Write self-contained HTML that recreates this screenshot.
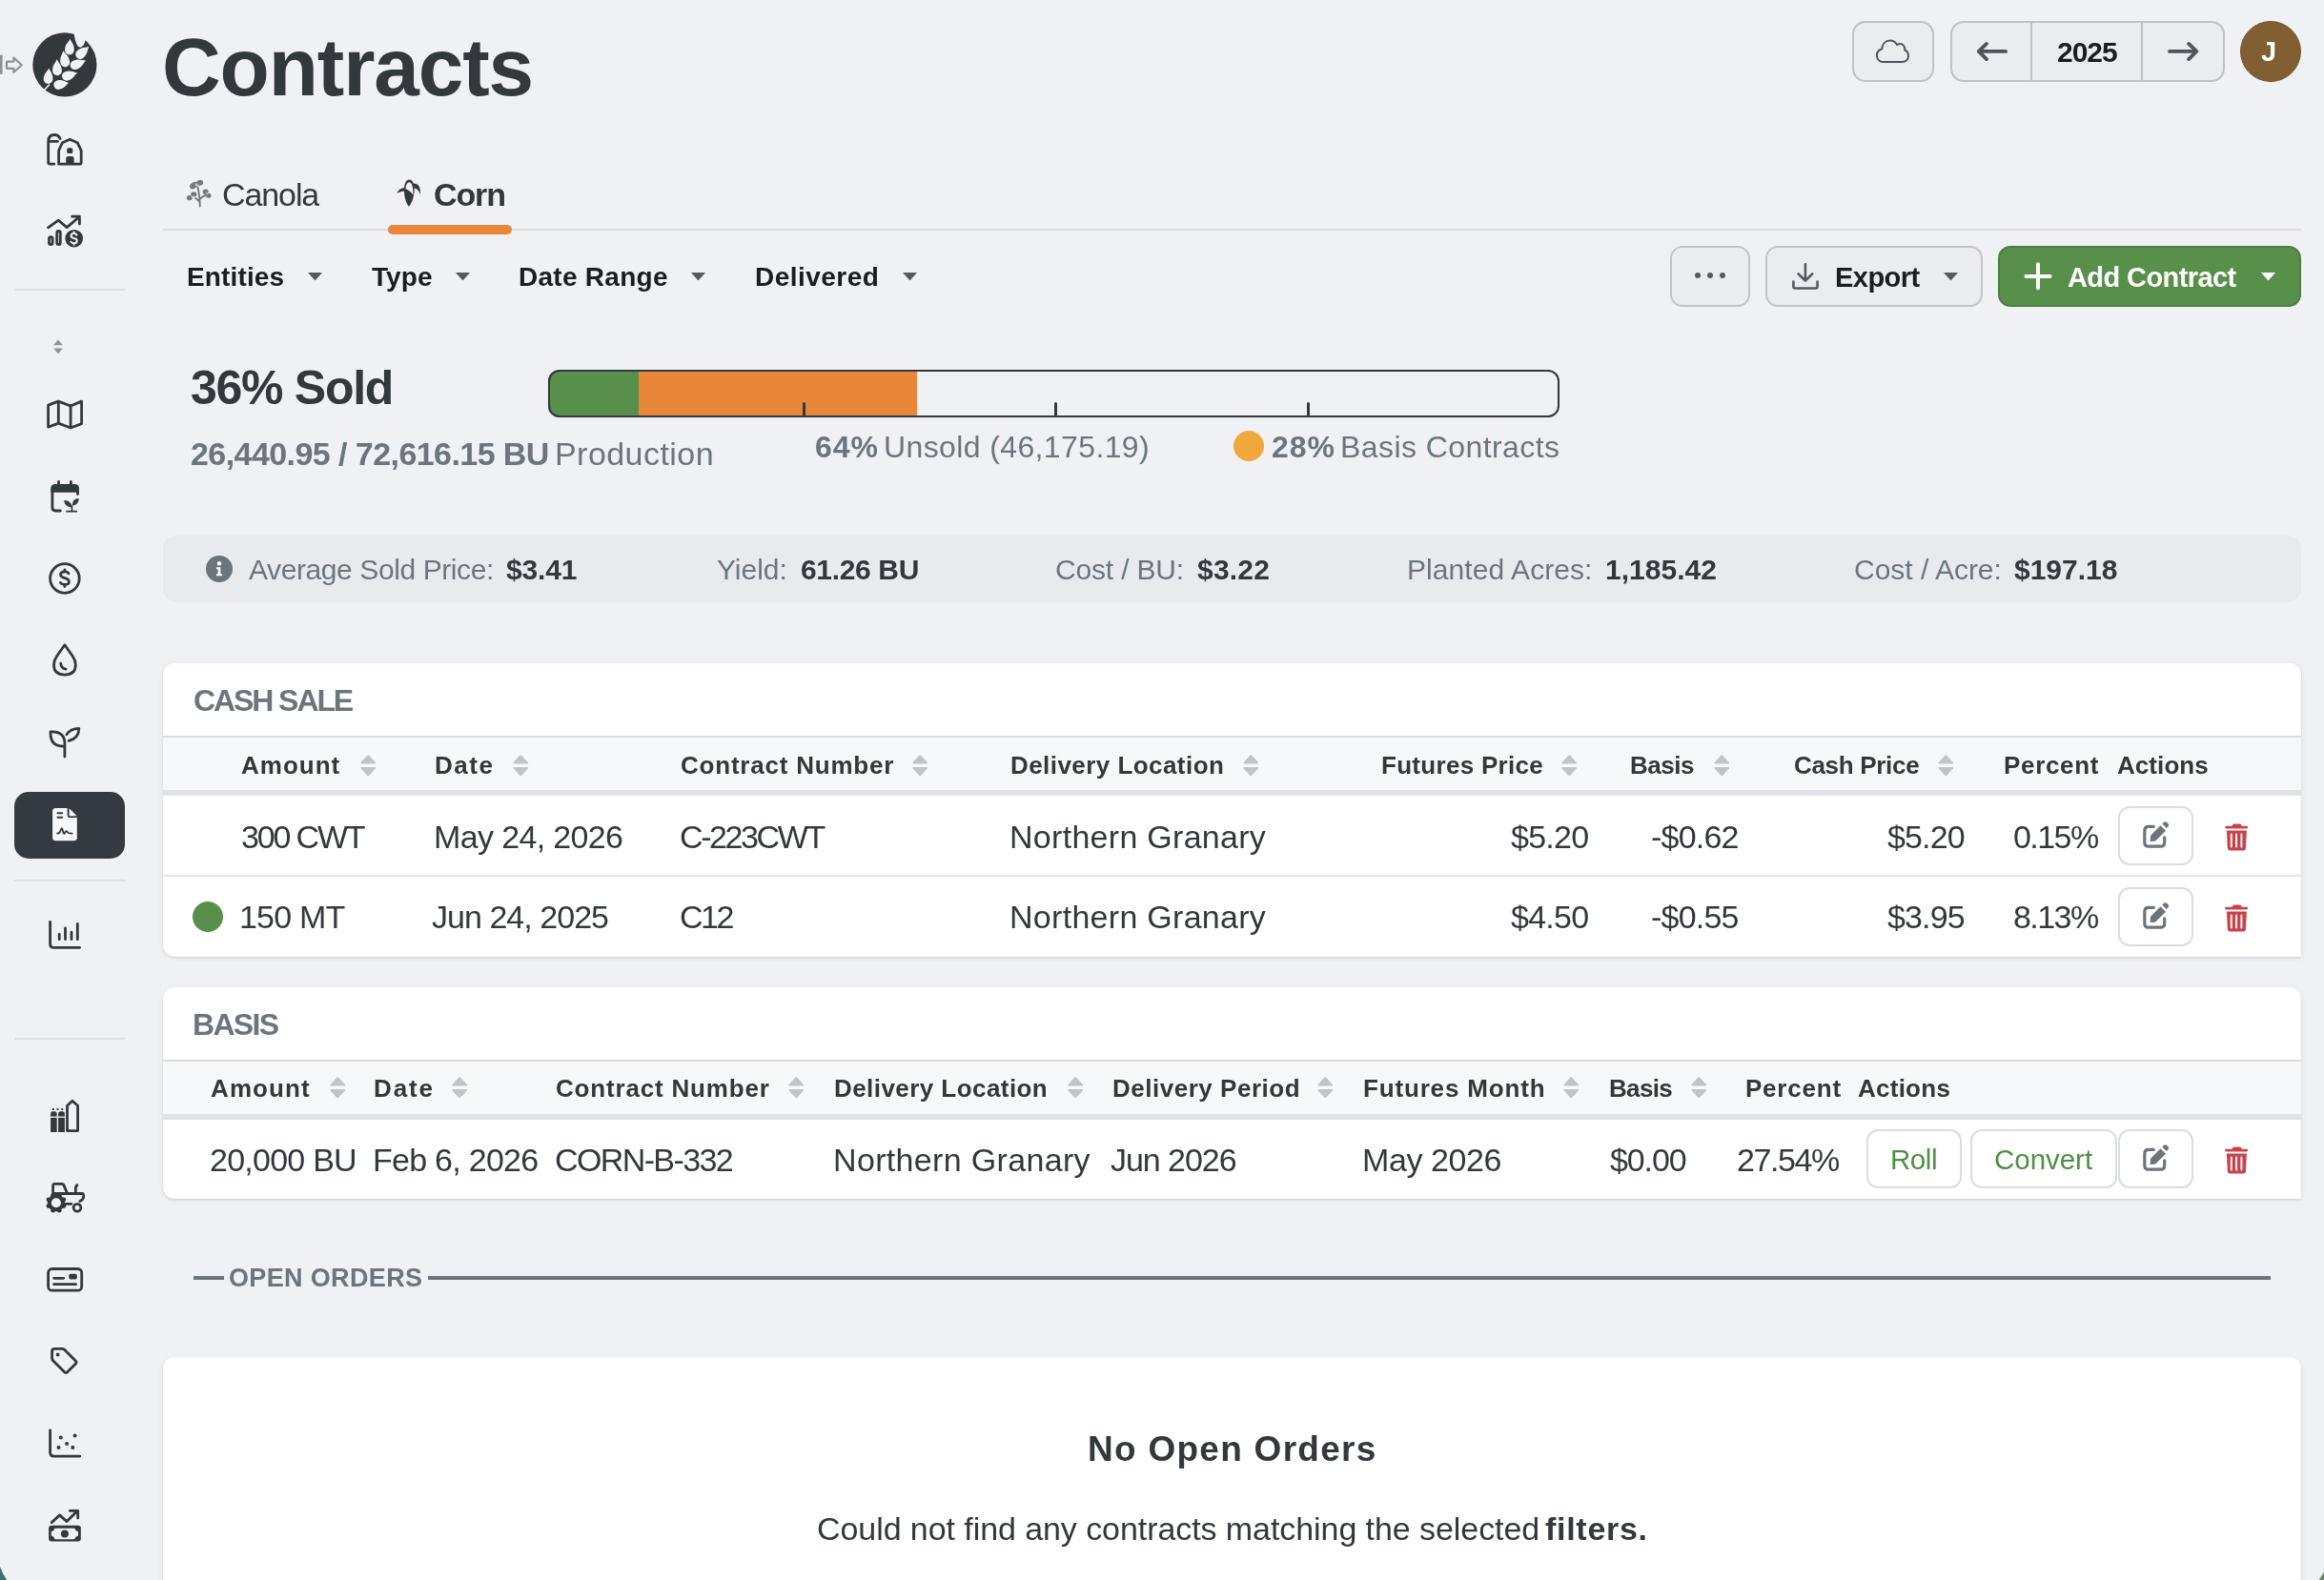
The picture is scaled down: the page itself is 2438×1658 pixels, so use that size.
<!DOCTYPE html>
<html><head><meta charset="utf-8"><title>Contracts</title><style>html,body{margin:0;padding:0;width:2438px;height:1658px;overflow:hidden;background:#f0f1f4;font-family:"Liberation Sans",sans-serif;}
.a{position:absolute;}
.tx{position:absolute;white-space:nowrap;line-height:1;will-change:transform;}
.tx b{font-weight:700}
</style></head><body>
<div class="a nt" style="left:171px;top:562px;width:2243px;height:70px;background:#e9eaee;border-radius:14px;"></div>
<div class="a nt" style="left:171px;top:696px;width:2243px;height:308px;background:#fff;border-radius:12px 12px 0 12px;box-shadow:0 1px 2px rgba(0,0,0,0.12),0 2px 6px rgba(0,0,0,0.04),0 0 8px rgba(0,0,0,0.025);"></div>
<div class="a nt" style="left:171px;top:1036px;width:2243px;height:222px;background:#fff;border-radius:12px 12px 0 12px;box-shadow:0 1px 2px rgba(0,0,0,0.12),0 2px 6px rgba(0,0,0,0.04),0 0 8px rgba(0,0,0,0.025);"></div>
<div class="a nt" style="left:171px;top:1424px;width:2243px;height:276px;background:#fff;border-radius:12px;box-shadow:0 1px 2px rgba(0,0,0,0.12),0 2px 6px rgba(0,0,0,0.04),0 0 8px rgba(0,0,0,0.025);"></div>
<div class="a nt" style="left:171px;top:772px;width:2243px;height:2px;background:#dcdcdd;"></div>
<div class="a nt" style="left:171px;top:774px;width:2243px;height:55px;background:#f7f8fa;"></div>
<div class="a nt" style="left:171px;top:829px;width:2243px;height:6px;background:#dfe2e6;"></div>
<div class="a nt" style="left:171px;top:1112px;width:2243px;height:2px;background:#dcdcdd;"></div>
<div class="a nt" style="left:171px;top:1114px;width:2243px;height:55px;background:#f7f8fa;"></div>
<div class="a nt" style="left:171px;top:1169px;width:2243px;height:6px;background:#dfe2e6;"></div>
<div class="a nt" style="left:171px;top:918px;width:2243px;height:2px;background:#e3e5e8;"></div>
<div class="a nt" style="left:171px;top:240px;width:2243px;height:2px;background:#dcdee3;"></div>
<div class="a nt" style="left:407px;top:236px;width:130px;height:10px;background:#e8873a;border-radius:5px;"></div>
<div class="a nt" style="left:15px;top:303px;width:116px;height:2px;background:#dfe1e5;"></div>
<div class="a nt" style="left:15px;top:923px;width:116px;height:2px;background:#dfe1e5;"></div>
<div class="a nt" style="left:15px;top:1089px;width:116px;height:2px;background:#dfe1e5;"></div>
<div class="a nt" style="left:15px;top:831px;width:116px;height:70px;background:#343a3f;border-radius:15px;"></div>
<div class="a nt" style="left:1943px;top:22px;width:86px;height:64px;background:#ebecf0;border:2px solid #bfc1c4;border-radius:14px;box-sizing:border-box;"></div>
<div class="a nt" style="left:2046px;top:22px;width:288px;height:64px;background:#ebecf0;border:2px solid #bfc1c4;border-radius:14px;box-sizing:border-box;"></div>
<div class="a nt" style="left:2130px;top:24px;width:2px;height:60px;background:#bfc1c4;"></div>
<div class="a nt" style="left:2246px;top:24px;width:2px;height:60px;background:#bfc1c4;"></div>
<div class="a nt" style="left:2350px;top:22px;width:64px;height:64px;background:#825f32;border:1px solid #76562d;box-sizing:border-box;border-radius:50%;"></div>
<svg class="a nt" style="left:322.6px;top:285.7px;" width="15" height="8.5" viewBox="0 0 15 8.5"><path d="M0 0H15L7.5 8.5Z" fill="#555a61"/></svg>
<svg class="a nt" style="left:478px;top:285.7px;" width="15" height="8.5" viewBox="0 0 15 8.5"><path d="M0 0H15L7.5 8.5Z" fill="#555a61"/></svg>
<svg class="a nt" style="left:724.6px;top:285.7px;" width="15" height="8.5" viewBox="0 0 15 8.5"><path d="M0 0H15L7.5 8.5Z" fill="#555a61"/></svg>
<svg class="a nt" style="left:946.7px;top:285.7px;" width="15" height="8.5" viewBox="0 0 15 8.5"><path d="M0 0H15L7.5 8.5Z" fill="#555a61"/></svg>
<div class="a nt" style="left:1752px;top:258px;width:84px;height:64px;background:#ebecf0;border:2px solid #c2c4c8;border-radius:13px;box-sizing:border-box;"></div>
<div class="a nt" style="left:1778px;top:286px;width:6px;height:6px;background:#555a61;border-radius:50%;"></div>
<div class="a nt" style="left:1791px;top:286px;width:6px;height:6px;background:#555a61;border-radius:50%;"></div>
<div class="a nt" style="left:1804px;top:286px;width:6px;height:6px;background:#555a61;border-radius:50%;"></div>
<div class="a nt" style="left:1852px;top:258px;width:228px;height:64px;background:#ebecf0;border:2px solid #c2c4c8;border-radius:13px;box-sizing:border-box;"></div>
<svg class="a nt" style="left:2038.7px;top:286px;" width="15" height="8.5" viewBox="0 0 15 8.5"><path d="M0 0H15L7.5 8.5Z" fill="#555a61"/></svg>
<div class="a nt" style="left:2096px;top:258px;width:318px;height:64px;background:#588f4b;border:2px solid #4b7f3f;border-radius:13px;box-sizing:border-box;"></div>
<svg class="a nt" style="left:2372px;top:286px;" width="15" height="8.5" viewBox="0 0 15 8.5"><path d="M0 0H15L7.5 8.5Z" fill="#ffffff"/></svg>
<div class="a nt" style="left:575px;top:388px;width:1061px;height:50px;border-radius:12px;overflow:hidden;background:#f0f1f4;"><div class="a" style="left:0;top:0;width:95px;height:50px;background:#588f4b;"></div><div class="a" style="left:95px;top:0;width:292px;height:50px;background:#e8873a;"></div></div>
<div class="a nt" style="left:575px;top:388px;width:1061px;height:50px;border:2.5px solid #33383d;border-radius:12px;box-sizing:border-box;"></div>
<div class="a nt" style="left:841.5px;top:422px;width:3.0px;height:15px;background:#33383d;border-radius:1.5px 1.5px 0 0;"></div>
<div class="a nt" style="left:1105.5px;top:422px;width:3.0px;height:15px;background:#33383d;border-radius:1.5px 1.5px 0 0;"></div>
<div class="a nt" style="left:1370.5px;top:422px;width:3.0px;height:15px;background:#33383d;border-radius:1.5px 1.5px 0 0;"></div>
<div class="a nt" style="left:1294px;top:452px;width:32px;height:32px;background:#f0a83c;border-radius:50%;"></div>
<svg class="a nt" style="left:216px;top:583px;" width="28" height="28" viewBox="0 0 28 28"><circle cx="14" cy="14" r="14" fill="#6c757d"/><circle cx="14" cy="8.3" r="2.2" fill="#fff"/><path d="M11 12.2H15.3V19.2H17V21.3H11V19.2H12.7V14.3H11Z" fill="#fff"/></svg>
<svg class="a nt" style="left:377.9px;top:791.6px;" width="16.5" height="22.5" viewBox="0 0 16.5 22.5"><path d="M8.25 1.2L15.2 8.6H1.3Z M8.25 21.3L15.2 13.9H1.3Z" fill="#c2c3c5" stroke="#c2c3c5" stroke-width="1.9" stroke-linejoin="round"/></svg>
<svg class="a nt" style="left:537.7px;top:791.6px;" width="16.5" height="22.5" viewBox="0 0 16.5 22.5"><path d="M8.25 1.2L15.2 8.6H1.3Z M8.25 21.3L15.2 13.9H1.3Z" fill="#c2c3c5" stroke="#c2c3c5" stroke-width="1.9" stroke-linejoin="round"/></svg>
<svg class="a nt" style="left:957px;top:791.6px;" width="16.5" height="22.5" viewBox="0 0 16.5 22.5"><path d="M8.25 1.2L15.2 8.6H1.3Z M8.25 21.3L15.2 13.9H1.3Z" fill="#c2c3c5" stroke="#c2c3c5" stroke-width="1.9" stroke-linejoin="round"/></svg>
<svg class="a nt" style="left:1303.6px;top:791.6px;" width="16.5" height="22.5" viewBox="0 0 16.5 22.5"><path d="M8.25 1.2L15.2 8.6H1.3Z M8.25 21.3L15.2 13.9H1.3Z" fill="#c2c3c5" stroke="#c2c3c5" stroke-width="1.9" stroke-linejoin="round"/></svg>
<svg class="a nt" style="left:1637.7px;top:791.6px;" width="16.5" height="22.5" viewBox="0 0 16.5 22.5"><path d="M8.25 1.2L15.2 8.6H1.3Z M8.25 21.3L15.2 13.9H1.3Z" fill="#c2c3c5" stroke="#c2c3c5" stroke-width="1.9" stroke-linejoin="round"/></svg>
<svg class="a nt" style="left:1797.8px;top:791.6px;" width="16.5" height="22.5" viewBox="0 0 16.5 22.5"><path d="M8.25 1.2L15.2 8.6H1.3Z M8.25 21.3L15.2 13.9H1.3Z" fill="#c2c3c5" stroke="#c2c3c5" stroke-width="1.9" stroke-linejoin="round"/></svg>
<svg class="a nt" style="left:2033.4px;top:791.6px;" width="16.5" height="22.5" viewBox="0 0 16.5 22.5"><path d="M8.25 1.2L15.2 8.6H1.3Z M8.25 21.3L15.2 13.9H1.3Z" fill="#c2c3c5" stroke="#c2c3c5" stroke-width="1.9" stroke-linejoin="round"/></svg>
<svg class="a nt" style="left:345.7px;top:1129.7px;" width="16.5" height="22.5" viewBox="0 0 16.5 22.5"><path d="M8.25 1.2L15.2 8.6H1.3Z M8.25 21.3L15.2 13.9H1.3Z" fill="#c2c3c5" stroke="#c2c3c5" stroke-width="1.9" stroke-linejoin="round"/></svg>
<svg class="a nt" style="left:473.7px;top:1129.7px;" width="16.5" height="22.5" viewBox="0 0 16.5 22.5"><path d="M8.25 1.2L15.2 8.6H1.3Z M8.25 21.3L15.2 13.9H1.3Z" fill="#c2c3c5" stroke="#c2c3c5" stroke-width="1.9" stroke-linejoin="round"/></svg>
<svg class="a nt" style="left:827.4px;top:1129.7px;" width="16.5" height="22.5" viewBox="0 0 16.5 22.5"><path d="M8.25 1.2L15.2 8.6H1.3Z M8.25 21.3L15.2 13.9H1.3Z" fill="#c2c3c5" stroke="#c2c3c5" stroke-width="1.9" stroke-linejoin="round"/></svg>
<svg class="a nt" style="left:1119.6px;top:1129.7px;" width="16.5" height="22.5" viewBox="0 0 16.5 22.5"><path d="M8.25 1.2L15.2 8.6H1.3Z M8.25 21.3L15.2 13.9H1.3Z" fill="#c2c3c5" stroke="#c2c3c5" stroke-width="1.9" stroke-linejoin="round"/></svg>
<svg class="a nt" style="left:1382px;top:1129.7px;" width="16.5" height="22.5" viewBox="0 0 16.5 22.5"><path d="M8.25 1.2L15.2 8.6H1.3Z M8.25 21.3L15.2 13.9H1.3Z" fill="#c2c3c5" stroke="#c2c3c5" stroke-width="1.9" stroke-linejoin="round"/></svg>
<svg class="a nt" style="left:1639.5px;top:1129.7px;" width="16.5" height="22.5" viewBox="0 0 16.5 22.5"><path d="M8.25 1.2L15.2 8.6H1.3Z M8.25 21.3L15.2 13.9H1.3Z" fill="#c2c3c5" stroke="#c2c3c5" stroke-width="1.9" stroke-linejoin="round"/></svg>
<svg class="a nt" style="left:1774px;top:1129.7px;" width="16.5" height="22.5" viewBox="0 0 16.5 22.5"><path d="M8.25 1.2L15.2 8.6H1.3Z M8.25 21.3L15.2 13.9H1.3Z" fill="#c2c3c5" stroke="#c2c3c5" stroke-width="1.9" stroke-linejoin="round"/></svg>
<div class="a nt" style="left:202px;top:946px;width:32px;height:32px;background:#588f4b;border-radius:50%;"></div>
<div class="a nt" style="left:2222px;top:846px;width:79px;height:62px;background:#fff;border:2px solid #dadde1;border-radius:12px;box-sizing:border-box;"></div>
<div class="a nt" style="left:2222px;top:931px;width:79px;height:62px;background:#fff;border:2px solid #dadde1;border-radius:12px;box-sizing:border-box;"></div>
<div class="a nt" style="left:2222px;top:1185px;width:79px;height:62px;background:#fff;border:2px solid #dadde1;border-radius:12px;box-sizing:border-box;"></div>
<div class="a nt" style="left:1958px;top:1185px;width:100px;height:62px;background:#fff;border:2px solid #dadde1;border-radius:12px;box-sizing:border-box;"></div>
<div class="a nt" style="left:2067px;top:1185px;width:154px;height:62px;background:#fff;border:2px solid #dadde1;border-radius:12px;box-sizing:border-box;"></div>
<div class="a nt" style="left:203px;top:1339px;width:32px;height:4px;background:#6c757d;"></div>
<div class="a nt" style="left:449px;top:1339px;width:1933px;height:4px;background:#6c757d;"></div>
<svg class="a nt" style="left:0;top:0" width="2438" height="1658" viewBox="0 0 2438 1658"><rect x="0" y="57.6" width="2.6" height="20.5" rx="1" fill="#8e9297"/><path d="M7 64.6H14.4V60.6L22.8 68.2L14.4 75.8V71.8H7Z" fill="none" stroke="#8e9297" stroke-width="2.2" stroke-linejoin="round"/><circle cx="67.9" cy="67.9" r="33.6" fill="#33383d"/><path d="M45.5 95.5L52 88.5" stroke="#f0f1f4" stroke-width="1.6"/><path d="M51.50 71.50C52.42 75.11 55.93 77.18 55.38 83.62A4.9 4.9 0 0 1 45.62 82.78C46.17 76.35 49.98 74.91 51.50 71.50Z" fill="#f0f1f4"/><path d="M59.80 62.00C61.08 65.67 64.79 67.46 64.90 74.22A4.9 4.9 0 0 1 55.10 74.38C54.99 67.61 58.64 65.71 59.80 62.00Z" fill="#f0f1f4"/><path d="M66.30 53.00C68.11 56.49 72.04 57.75 73.14 64.51A4.9 4.9 0 0 1 63.46 66.09C62.36 59.32 65.69 56.89 66.30 53.00Z" fill="#f0f1f4"/><path d="M73.70 40.80C74.68 44.39 78.23 46.40 77.79 52.83A4.9 4.9 0 0 1 68.01 52.17C68.45 45.73 72.24 44.23 73.70 40.80Z" fill="#f0f1f4"/><path d="M72.20 87.00C69.12 88.81 68.13 92.72 62.08 93.82A4.9 4.9 0 0 1 60.32 84.18C66.37 83.08 68.68 86.39 72.20 87.00Z" fill="#f0f1f4"/><path d="M81.20 76.20C78.15 78.45 77.55 82.49 71.28 84.47A4.9 4.9 0 0 1 68.32 75.13C74.59 73.15 77.41 76.11 81.20 76.20Z" fill="#f0f1f4"/><path d="M90.30 63.20C87.27 65.83 86.96 69.96 80.53 72.71A4.9 4.9 0 0 1 76.67 63.69C83.11 60.94 86.31 63.57 90.30 63.20Z" fill="#f0f1f4"/><path d="M93.50 48.80C91.52 52.18 92.56 56.17 87.44 60.68A4.9 4.9 0 0 1 80.96 53.32C86.07 48.81 89.90 50.34 93.50 48.80Z" fill="#f0f1f4"/><path d="M77.5 34.5C78.5 40 79.5 47.5 83.2 49.6C86.8 50 89 46 89.5 42.2L95 40L80 30Z" fill="#f0f1f4"/><path d="M77.8 35C80 36.5 83 38 86 40C88 41 89 41.5 89.5 42.2" fill="none"/><path d="M56.8 172.2H52.6Q50.7 172.2 50.7 170.3V148.5Q50.7 141.5 57 141.5Q61.5 141.5 63 145.5 M51 148.4H60.5" fill="none" stroke="#33383d" stroke-width="2.8" stroke-linecap="round" stroke-linejoin="round"/><path d="M61.6 172.2V158L65.5 149.7L73.3 146.2L81.2 149.7L85.2 158V170.5Q85.2 172.2 83.5 172.2H63.3Q61.6 172.2 61.6 170.5" fill="none" stroke="#33383d" stroke-width="2.8" stroke-linecap="round" stroke-linejoin="round"/><rect x="70.2" y="155.3" width="6.1" height="5.8" rx="1.6" fill="#33383d"/><path d="M69.2 172V166.5Q69.2 164.1 71.6 164.1H75.3Q77.7 164.1 77.7 166.5V172Z" fill="#33383d"/><path d="M50.5 238.8L61.3 231.2L70.1 238.6L83 227.8 M75.6 227.2H83.4V235" fill="none" stroke="#33383d" stroke-width="2.8" stroke-linecap="round" stroke-linejoin="round"/><rect x="51.5" y="248.7" width="3.6" height="7.8" rx="1.8" fill="none" stroke="#33383d" stroke-width="2.8" stroke-linecap="round" stroke-linejoin="round" stroke-width="2.4"/><rect x="59.7" y="242.4" width="3.6" height="14.1" rx="1.8" fill="none" stroke="#33383d" stroke-width="2.8" stroke-linecap="round" stroke-linejoin="round" stroke-width="2.4"/><circle cx="77.7" cy="250.2" r="9.3" fill="#33383d"/><path d="M80.5 246.6Q79.6 245 77.6 245Q74.6 245 74.6 247.4Q74.6 249.3 77.6 250Q80.8 250.6 80.8 252.8Q80.8 255.2 77.6 255.2Q75.4 255.2 74.4 253.7 M77.6 243.5V245 M77.6 255.2V256.8" fill="none" stroke="#f0f1f4" stroke-width="2" stroke-linecap="round"/><path d="M61 356.5L65.8 362.3H56.2Z M61 371.3L65.8 365.5H56.2Z" fill="#8e9297"/><path d="M50.6 425.1L61.3 421.1L74.1 426L85.6 421.1V444.6L74.1 449L61.3 444.1L50.6 448.1Z M61.3 421.1V444.1 M74.1 426V449" fill="none" stroke="#33383d" stroke-width="2.8" stroke-linecap="round" stroke-linejoin="round"/><path d="M61.5 505.4V508.5 M74.4 505.4V508.5" fill="none" stroke="#33383d" stroke-width="2.8" stroke-linecap="round" stroke-linejoin="round" stroke-width="2.6"/><path d="M53.3 512.6Q53.3 507.9 58 507.9H78.3Q83 507.9 83 512.6V516.8H53.3Z" fill="#33383d"/><path d="M54.9 514V532.5Q54.9 536 58.4 536H63.3 M81.5 514V518.5" fill="none" stroke="#33383d" stroke-width="2.8" stroke-linecap="round" stroke-linejoin="round" stroke-width="3.1"/><path d="M69.3 536.6H81 M75.4 536.3V530.5" fill="none" stroke="#33383d" stroke-width="1.8"/><path d="M67.2 525Q67.6 532.4 75.6 532.2Q75.2 525.4 67.2 525Z" fill="#33383d"/><path d="M82.8 523Q75.6 523.4 75.8 530.6Q82.6 530 82.8 523Z" fill="#33383d"/><circle cx="67.9" cy="607" r="15.3" fill="none" stroke="#33383d" stroke-width="2.8" stroke-linecap="round" stroke-linejoin="round" stroke-width="3.1"/><path d="M72 601.9Q71 599.9 67.9 599.9Q63.6 599.9 63.6 603.1Q63.6 605.6 67.9 606.6Q72.4 607.6 72.4 610.4Q72.4 613.4 67.9 613.4Q64.6 613.4 63.4 611.4 M67.9 597.9V599.9 M67.9 613.4V615.6" fill="none" stroke="#33383d" stroke-width="2.8" stroke-linecap="round" stroke-linejoin="round" stroke-width="2.6"/><path d="M67.9 676.8L59.8 688.3Q56.5 693 56.5 697.6Q56.5 708.2 67.9 708.2Q79.3 708.2 79.3 697.6Q79.3 693 76 688.3Z" fill="none" stroke="#33383d" stroke-width="2.8" stroke-linecap="round" stroke-linejoin="round" stroke-width="2.9"/><path d="M63.7 696.1Q64.2 701.2 69 702.2" fill="none" stroke="#33383d" stroke-width="2.8" stroke-linecap="round" stroke-linejoin="round" stroke-width="2.8"/><path d="M67.9 794V780 Q67.9 767.8 54.5 767.8H53V769.5Q53 783 66.5 783.2H67.9" fill="none" stroke="#33383d" stroke-width="2.8" stroke-linecap="round" stroke-linejoin="round" stroke-width="2.9"/><path d="M69.9 770.8Q74 764.6 82.8 764.4Q82.8 774.5 72.2 777.4" fill="none" stroke="#33383d" stroke-width="2.8" stroke-linecap="round" stroke-linejoin="round" stroke-width="2.9"/><path d="M58.5 847.9H70.6V855.5Q70.6 858 73 858H80.8V879Q80.8 882.2 77.6 882.2H58.3Q55.1 882.2 55.1 879V851.3Q55.1 847.9 58.5 847.9Z M72.6 848.2L80.6 856.2H72.6Z" fill="#f7f8fa"/><path d="M60.4 853.2H65.3 M60.4 857.8H65.3" stroke="#33383d" stroke-width="1.9" stroke-linecap="round"/><path d="M60.2 874.5Q62.5 874.8 63.5 871.5Q64.5 868.2 65.3 869.8Q66 871.5 66.5 874Q67.3 876 68.5 873.2Q69.5 871 71 873.5Q72 874.8 75.7 874.6" fill="none" stroke="#33383d" stroke-width="1.8" stroke-linecap="round" stroke-linejoin="round"/><path d="M52.6 967.3V990.5Q52.6 994.4 56.5 994.4H83.5 M62.2 980.3V985.7 M68.5 973.9V985.7 M75 978.2V985.7 M81.3 969.4V985.7" fill="none" stroke="#33383d" stroke-width="2.8" stroke-linecap="round" stroke-linejoin="round" stroke-width="2.9"/><path d="M53.1 1188V1169Q53.1 1166.3 55.5 1166.3H57.3Q59.7 1166.3 59.7 1169V1188Z M61.1 1188V1169Q61.1 1166.3 63.5 1166.3H65.5Q67.9 1166.3 67.9 1169V1188Z" fill="#33383d"/><path d="M52 1172.2H69" stroke="#f0f1f4" stroke-width="1.3"/><path d="M54.8 1164H56.8 M59.5 1164H61.5 M64.2 1164H66.2" stroke="#33383d" stroke-width="2"/><path d="M70.5 1186.6V1160.3L75.9 1155.3L81.6 1160.3V1186.6Z" fill="none" stroke="#33383d" stroke-width="2.8" stroke-linecap="round" stroke-linejoin="round" stroke-width="2.8"/><path d="M55.6 1250.5V1244.2Q55.6 1242.4 57.4 1242.4H65.4Q66.3 1242.4 66.8 1243.4L70 1251" fill="none" stroke="#33383d" stroke-width="2.8" stroke-linecap="round" stroke-linejoin="round" stroke-width="2.7"/><path d="M55.6 1252.5H86Q87.6 1252.5 87.6 1254.5V1256Q87.6 1258.8 83.8 1260.5 M79.3 1251V1247Q79.6 1244.8 80.9 1243.6 M64 1263.3H75" fill="none" stroke="#33383d" stroke-width="2.8" stroke-linecap="round" stroke-linejoin="round" stroke-width="2.7"/><circle cx="66.85" cy="1265.49" r="2.4" fill="#33383d"/><circle cx="62.19" cy="1270.15" r="2.4" fill="#33383d"/><circle cx="55.61" cy="1270.15" r="2.4" fill="#33383d"/><circle cx="50.95" cy="1265.49" r="2.4" fill="#33383d"/><circle cx="50.95" cy="1258.91" r="2.4" fill="#33383d"/><circle cx="55.61" cy="1254.25" r="2.4" fill="#33383d"/><circle cx="62.19" cy="1254.25" r="2.4" fill="#33383d"/><circle cx="66.85" cy="1258.91" r="2.4" fill="#33383d"/><circle cx="58.9" cy="1262.2" r="9" fill="#33383d"/><circle cx="58.9" cy="1262.2" r="5" fill="#f0f1f4"/><circle cx="81" cy="1267.3" r="3.9" fill="none" stroke="#33383d" stroke-width="2.8" stroke-linecap="round" stroke-linejoin="round" stroke-width="2.8"/><rect x="50.6" y="1331.5" width="35.1" height="22.7" rx="4" fill="none" stroke="#33383d" stroke-width="2.8" stroke-linecap="round" stroke-linejoin="round" stroke-width="2.7"/><path d="M56.6 1341.3H66.7 M56.6 1347.7H79.6" fill="none" stroke="#33383d" stroke-width="2.8" stroke-linecap="round" stroke-linejoin="round" stroke-width="2.6"/><rect x="72.3" y="1336.8" width="8.5" height="5.8" rx="1.8" fill="#33383d"/><path d="M57.3 1415.3H65.5Q66.5 1415.3 67.3 1416.1L79.5 1428.3Q80.7 1429.6 79.5 1430.9L70.4 1440Q69.2 1441.2 67.9 1440L55.6 1427.8Q54.6 1426.8 54.6 1425.6V1418Q54.6 1415.3 57.3 1415.3Z" fill="none" stroke="#33383d" stroke-width="2.8" stroke-linecap="round" stroke-linejoin="round" stroke-width="2.8"/><circle cx="60.6" cy="1421.5" r="1.9" fill="#33383d"/><path d="M52.6 1500.8V1524Q52.6 1528.1 56.7 1528.1H83.8" fill="none" stroke="#33383d" stroke-width="2.8" stroke-linecap="round" stroke-linejoin="round" stroke-width="2.9"/><circle cx="63.8" cy="1508.4" r="2" fill="#33383d"/><circle cx="78.6" cy="1506.4" r="2" fill="#33383d"/><circle cx="70.1" cy="1515" r="2" fill="#33383d"/><circle cx="61.5" cy="1519.1" r="2" fill="#33383d"/><circle cx="76.3" cy="1519.1" r="2" fill="#33383d"/><path d="M54.2 1597.6L62.6 1589.9L70.1 1596.6L81.2 1585.6 M73.3 1585.3H81.7V1593" fill="none" stroke="#33383d" stroke-width="2.8" stroke-linecap="round" stroke-linejoin="round" stroke-width="2.9"/><rect x="51.1" y="1600.8" width="33.7" height="16.8" rx="3" fill="#33383d"/><path d="M57.6 1603.8H78.2Q79 1606.8 82 1607.3V1611.6Q79 1612.2 78.2 1615.2H57.6Q56.8 1612.2 53.8 1611.6V1607.3Q56.8 1606.8 57.6 1603.8Z" fill="#f0f1f4"/><circle cx="67.9" cy="1609.5" r="4" fill="#33383d"/><path d="M1975.5 65H1995.5C1999.2 65 2002 62.2 2002 58.8C2002 55.8 2000.5 53.4 1998.2 52.5C1998.6 48.6 1996.3 46 1993.1 46C1991.9 46 1990.9 46.4 1990.1 47C1988.2 43.9 1985.6 42.6 1982.8 42.6C1977.8 42.6 1974.6 46.3 1974.3 51.3C1971.1 52.3 1968.9 55.1 1968.9 58.5C1968.9 62.1 1971.8 65 1975.5 65Z" fill="none" stroke="#4f555c" stroke-width="2"/><path d="M2104.1 53.9H2075.8 M2084 45.9L2075.8 53.9L2084 62.1" fill="none" stroke="#4e555d" stroke-width="3.8" stroke-linecap="round" stroke-linejoin="round"/><path d="M2276 53.9H2304.3 M2296.1 45.9L2304.3 53.9L2296.1 62.1" fill="none" stroke="#4e555d" stroke-width="3.8" stroke-linecap="round" stroke-linejoin="round"/><path d="M209.8 216.6Q209.8 206 207.5 196.5 M210 208.7Q212.2 205.8 215.8 205 M209.4 211.8Q207.6 209.6 205.2 208" fill="none" stroke="#75797e" stroke-width="1.9" stroke-linecap="round"/><ellipse cx="203.2" cy="194.6" rx="4.6" ry="3.1" transform="rotate(-32 203.2 194.6)" fill="#75797e"/><ellipse cx="209.6" cy="191.8" rx="3.6" ry="2.9" transform="rotate(-10 209.6 191.8)" fill="#75797e"/><ellipse cx="198.8" cy="207.6" rx="3" ry="2.7" fill="#75797e"/><ellipse cx="203.3" cy="204" rx="3.1" ry="2.8" fill="#75797e"/><ellipse cx="215.6" cy="201.3" rx="3" ry="2.8" fill="#75797e"/><ellipse cx="218.9" cy="205.3" rx="2.6" ry="2.5" fill="#75797e"/><path d="M205 192.6L206 195L207.2 192.4 M201 205.6L202.3 207.6L203.6 205.4 M216.2 202.2L217.6 203.6L218.6 201.8" stroke="#f0f1f4" stroke-width="0.9" fill="none"/><path d="M429.4 188.4C425.6 188.4 424.2 193.5 424 197.6C423.6 205 425.5 212.5 428.9 216.8C432.5 212.5 434.8 205 434.8 197.4C434.6 192.8 432.8 188.4 429.4 188.4Z" fill="#33383d"/><path d="M429.4 191.3C426.8 191.3 425.6 195 425.6 198.3C428.5 199.5 431.5 201.5 433.4 204.6C433.6 200.5 433.2 196.5 432.2 194C431.5 192.2 430.5 191.3 429.4 191.3Z" fill="#f0f1f4"/><path d="M416.3 202.8C418.5 198.5 421 197 424.5 197.2L424.2 200.5C421.5 200.6 419 201.5 416.3 202.8Z" fill="#33383d"/><path d="M433.8 192.6C437.5 192.2 439.5 194.5 440.4 197.5C441 199.5 441 202 440.7 204C439.8 201 438.3 198.8 436.2 197.8L434.4 197.8Z" fill="#33383d"/><path d="M1881.4 295.5V300.5Q1881.4 302.5 1883.4 302.5H1904.6Q1906.6 302.5 1906.6 300.5V295.5 M1893.9 277.3V294.3 M1886.6 287.5L1893.9 294.5L1901.2 287.5" fill="none" stroke="#555a61" stroke-width="2.6" stroke-linecap="round" stroke-linejoin="round"/><path d="M2138 277.3V302.3 M2125.5 290H2150.5" stroke="#fff" stroke-width="4" stroke-linecap="round"/><g transform="translate(0 0.00)"><path d="M2259.3 867.3H2254Q2249.8 867.3 2249.8 871.5V883.9Q2249.8 888.1 2254 888.1H2266.5Q2270.7 888.1 2270.7 883.9V878.8" fill="none" stroke="#6c757d" stroke-width="3.2" stroke-linecap="round"/><path d="M2266.5 866.3L2272 871.8L2262.2 881.6Q2261.4 882.4 2260.2 882.8L2255.6 882.9L2255.9 878.2Q2256 877 2256.8 876.1Z" fill="#6c757d"/><path d="M2268.3 864.5L2270 862.8Q2271.5 861.5 2273 862.8L2274.5 864.3Q2275.8 865.8 2274.5 867.3L2272.8 869Z" fill="#6c757d"/></g><g transform="translate(0 85.00)"><path d="M2259.3 867.3H2254Q2249.8 867.3 2249.8 871.5V883.9Q2249.8 888.1 2254 888.1H2266.5Q2270.7 888.1 2270.7 883.9V878.8" fill="none" stroke="#6c757d" stroke-width="3.2" stroke-linecap="round"/><path d="M2266.5 866.3L2272 871.8L2262.2 881.6Q2261.4 882.4 2260.2 882.8L2255.6 882.9L2255.9 878.2Q2256 877 2256.8 876.1Z" fill="#6c757d"/><path d="M2268.3 864.5L2270 862.8Q2271.5 861.5 2273 862.8L2274.5 864.3Q2275.8 865.8 2274.5 867.3L2272.8 869Z" fill="#6c757d"/></g><g transform="translate(0 339.00)"><path d="M2259.3 867.3H2254Q2249.8 867.3 2249.8 871.5V883.9Q2249.8 888.1 2254 888.1H2266.5Q2270.7 888.1 2270.7 883.9V878.8" fill="none" stroke="#6c757d" stroke-width="3.2" stroke-linecap="round"/><path d="M2266.5 866.3L2272 871.8L2262.2 881.6Q2261.4 882.4 2260.2 882.8L2255.6 882.9L2255.9 878.2Q2256 877 2256.8 876.1Z" fill="#6c757d"/><path d="M2268.3 864.5L2270 862.8Q2271.5 861.5 2273 862.8L2274.5 864.3Q2275.8 865.8 2274.5 867.3L2272.8 869Z" fill="#6c757d"/></g><g transform="translate(0 0.50)"><path d="M2341.5 866.2L2342.5 864.6Q2343 864 2343.8 864H2349.5Q2350.3 864 2350.8 864.6L2351.8 866.2H2356.5Q2358.3 866.2 2358.3 867.6Q2358.3 869 2356.5 869H2335.8Q2334 869 2334 867.6Q2334 866.2 2335.8 866.2Z" fill="#c9434c"/><path d="M2335.9 871H2356.9L2356 889.2Q2355.8 892 2353 892H2339.8Q2337 892 2336.8 889.2Z" fill="#c9434c"/><path d="M2340.8 875V888 M2346.1 875V888 M2351.4 875V888" stroke="#fff" stroke-width="1.9" stroke-linecap="round"/></g><g transform="translate(0 85.50)"><path d="M2341.5 866.2L2342.5 864.6Q2343 864 2343.8 864H2349.5Q2350.3 864 2350.8 864.6L2351.8 866.2H2356.5Q2358.3 866.2 2358.3 867.6Q2358.3 869 2356.5 869H2335.8Q2334 869 2334 867.6Q2334 866.2 2335.8 866.2Z" fill="#c9434c"/><path d="M2335.9 871H2356.9L2356 889.2Q2355.8 892 2353 892H2339.8Q2337 892 2336.8 889.2Z" fill="#c9434c"/><path d="M2340.8 875V888 M2346.1 875V888 M2351.4 875V888" stroke="#fff" stroke-width="1.9" stroke-linecap="round"/></g><g transform="translate(0 339.50)"><path d="M2341.5 866.2L2342.5 864.6Q2343 864 2343.8 864H2349.5Q2350.3 864 2350.8 864.6L2351.8 866.2H2356.5Q2358.3 866.2 2358.3 867.6Q2358.3 869 2356.5 869H2335.8Q2334 869 2334 867.6Q2334 866.2 2335.8 866.2Z" fill="#c9434c"/><path d="M2335.9 871H2356.9L2356 889.2Q2355.8 892 2353 892H2339.8Q2337 892 2336.8 889.2Z" fill="#c9434c"/><path d="M2340.8 875V888 M2346.1 875V888 M2351.4 875V888" stroke="#fff" stroke-width="1.9" stroke-linecap="round"/></g><path d="M0 1644Q3 1652 7.2 1658H0Z" fill="#3f7270"/><path d="M2438 1649.4Q2435 1654 2432.7 1658H2438Z" fill="#6f876b"/></svg>
<div class="tx" id="title" style="left:170.00px;top:28.22px;font-size:85.5px;font-weight:700;color:#33383d;letter-spacing:-1.125px;">Contracts</div>
<div class="tx" id="yr" style="left:2158.00px;top:40.11px;font-size:30px;font-weight:600;color:#1b1e21;letter-spacing:-1.000px;">2025</div>
<div class="tx" id="avj" style="left:2372.00px;top:40.25px;font-size:29px;font-weight:700;color:#ffffff;letter-spacing:0.000px;">J</div>
<div class="tx" id="tcan" style="left:233.00px;top:187.22px;font-size:34px;font-weight:400;color:#33383d;letter-spacing:-1.100px;">Canola</div>
<div class="tx" id="tcorn" style="left:455.00px;top:187.22px;font-size:34px;font-weight:700;color:#33383d;letter-spacing:-1.100px;">Corn</div>
<div class="tx" id="fent" style="left:196.00px;top:277.30px;font-size:28px;font-weight:600;color:#1b1e21;letter-spacing:0.143px;">Entities</div>
<div class="tx" id="ftype" style="left:390.00px;top:277.30px;font-size:28px;font-weight:600;color:#1b1e21;letter-spacing:0.067px;">Type</div>
<div class="tx" id="fdate" style="left:544.00px;top:277.30px;font-size:28px;font-weight:600;color:#1b1e21;letter-spacing:0.278px;">Date Range</div>
<div class="tx" id="fdel" style="left:792.00px;top:277.30px;font-size:28px;font-weight:600;color:#1b1e21;letter-spacing:0.475px;">Delivered</div>
<div class="tx" id="exp" style="left:1925.00px;top:277.25px;font-size:29px;font-weight:600;color:#1b1e21;letter-spacing:-0.540px;">Export</div>
<div class="tx" id="add" style="left:2169.00px;top:276.85px;font-size:29px;font-weight:600;color:#ffffff;letter-spacing:-0.582px;">Add Contract</div>
<div class="tx" id="sold" style="left:200.00px;top:381.68px;font-size:50px;font-weight:700;color:#33383d;letter-spacing:-1.286px;">36% Sold</div>
<div class="tx" id="prod1" style="left:200.00px;top:459.22px;font-size:34px;font-weight:700;color:#6c757d;letter-spacing:-0.565px;">26,440.95 / 72,616.15 BU</div>
<div class="tx" id="prod2" style="left:582.20px;top:459.22px;font-size:34px;font-weight:400;color:#6c757d;letter-spacing:0.444px;">Production</div>
<div class="tx" id="uns1" style="left:854.80px;top:452.91px;font-size:32px;font-weight:700;color:#6c757d;letter-spacing:1.000px;">64%</div>
<div class="tx" id="uns2" style="left:927.40px;top:452.91px;font-size:32px;font-weight:400;color:#6c757d;letter-spacing:0.382px;">Unsold (46,175.19)</div>
<div class="tx" id="bc1" style="left:1334.00px;top:452.91px;font-size:32px;font-weight:700;color:#6c757d;letter-spacing:1.000px;">28%</div>
<div class="tx" id="bc2" style="left:1406.00px;top:452.91px;font-size:32px;font-weight:400;color:#6c757d;letter-spacing:0.429px;">Basis Contracts</div>
<div class="tx" id="s1l" style="left:261.00px;top:583.00px;font-size:30px;font-weight:400;color:#6c757d;letter-spacing:-0.406px;">Average Sold Price:</div>
<div class="tx" id="s1v" style="left:531.00px;top:583.00px;font-size:30px;font-weight:700;color:#33383d;letter-spacing:-0.150px;">$3.41</div>
<div class="tx" id="s2l" style="left:752.00px;top:583.00px;font-size:30px;font-weight:400;color:#6c757d;letter-spacing:-0.040px;">Yield:</div>
<div class="tx" id="s2v" style="left:840.00px;top:583.00px;font-size:30px;font-weight:700;color:#33383d;letter-spacing:-0.343px;">61.26 BU</div>
<div class="tx" id="s3l" style="left:1107.00px;top:583.00px;font-size:30px;font-weight:400;color:#6c757d;letter-spacing:-0.167px;">Cost / BU:</div>
<div class="tx" id="s3v" style="left:1256.00px;top:583.00px;font-size:30px;font-weight:700;color:#33383d;letter-spacing:0.200px;">$3.22</div>
<div class="tx" id="s4l" style="left:1476.00px;top:583.00px;font-size:30px;font-weight:400;color:#6c757d;letter-spacing:0.077px;">Planted Acres:</div>
<div class="tx" id="s4v" style="left:1684.00px;top:583.00px;font-size:30px;font-weight:700;color:#33383d;letter-spacing:0.014px;">1,185.42</div>
<div class="tx" id="s5l" style="left:1945.00px;top:583.00px;font-size:30px;font-weight:400;color:#6c757d;letter-spacing:-0.018px;">Cost / Acre:</div>
<div class="tx" id="s5v" style="left:2113.00px;top:583.00px;font-size:30px;font-weight:700;color:#33383d;letter-spacing:0.000px;">$197.18</div>
<div class="tx" id="cs" style="left:203.00px;top:718.71px;font-size:32px;font-weight:700;color:#6c757d;letter-spacing:-2.088px;">CASH SALE</div>
<div class="tx" id="ch0" style="left:253.00px;top:789.69px;font-size:26px;font-weight:700;color:#33383d;letter-spacing:1.000px;">Amount</div>
<div class="tx" id="ch1" style="left:456.00px;top:789.69px;font-size:26px;font-weight:700;color:#33383d;letter-spacing:1.500px;">Date</div>
<div class="tx" id="ch2" style="left:714.00px;top:789.69px;font-size:26px;font-weight:700;color:#33383d;letter-spacing:0.786px;">Contract Number</div>
<div class="tx" id="ch3" style="left:1060.00px;top:789.69px;font-size:26px;font-weight:700;color:#33383d;letter-spacing:0.444px;">Delivery Location</div>
<div class="tx" id="ch4" style="left:1449.00px;top:789.69px;font-size:26px;font-weight:700;color:#33383d;letter-spacing:0.292px;">Futures Price</div>
<div class="tx" id="ch5" style="left:1710.00px;top:789.69px;font-size:26px;font-weight:700;color:#33383d;letter-spacing:-0.500px;">Basis</div>
<div class="tx" id="ch6" style="left:1882.00px;top:789.69px;font-size:26px;font-weight:700;color:#33383d;letter-spacing:-0.311px;">Cash Price</div>
<div class="tx" id="ch7" style="left:2102.00px;top:789.69px;font-size:26px;font-weight:700;color:#33383d;letter-spacing:0.667px;">Percent</div>
<div class="tx" id="ch8" style="left:2221.00px;top:789.69px;font-size:26px;font-weight:700;color:#33383d;letter-spacing:0.067px;">Actions</div>
<div class="tx" id="r1c0" style="left:253.00px;top:860.82px;font-size:34px;font-weight:400;color:#33383d;letter-spacing:-2.167px;">300 CWT</div>
<div class="tx" id="r1c1" style="left:455.00px;top:860.82px;font-size:34px;font-weight:400;color:#33383d;letter-spacing:-0.636px;">May 24, 2026</div>
<div class="tx" id="r1c2" style="left:713.00px;top:860.82px;font-size:34px;font-weight:400;color:#33383d;letter-spacing:-2.400px;">C-223CWT</div>
<div class="tx" id="r1c3" style="left:1059.00px;top:860.82px;font-size:34px;font-weight:400;color:#33383d;letter-spacing:0.287px;">Northern Granary</div>
<div class="tx" id="r1c4" style="left:1585.00px;top:860.82px;font-size:34px;font-weight:400;color:#33383d;letter-spacing:-0.725px;">$5.20</div>
<div class="tx" id="r1c5" style="left:1732.00px;top:860.82px;font-size:34px;font-weight:400;color:#33383d;letter-spacing:-0.800px;">-$0.62</div>
<div class="tx" id="r1c6" style="left:1980.00px;top:860.82px;font-size:34px;font-weight:400;color:#33383d;letter-spacing:-0.850px;">$5.20</div>
<div class="tx" id="r1c7" style="left:2112.00px;top:860.82px;font-size:34px;font-weight:400;color:#33383d;letter-spacing:-1.550px;">0.15%</div>
<div class="tx" id="r2c0" style="left:251.00px;top:944.92px;font-size:34px;font-weight:400;color:#33383d;letter-spacing:-0.800px;">150 MT</div>
<div class="tx" id="r2c1" style="left:453.00px;top:944.92px;font-size:34px;font-weight:400;color:#33383d;letter-spacing:-0.964px;">Jun 24, 2025</div>
<div class="tx" id="r2c2" style="left:713.00px;top:944.92px;font-size:34px;font-weight:400;color:#33383d;letter-spacing:-2.500px;">C12</div>
<div class="tx" id="r2c3" style="left:1059.00px;top:944.92px;font-size:34px;font-weight:400;color:#33383d;letter-spacing:0.287px;">Northern Granary</div>
<div class="tx" id="r2c4" style="left:1585.00px;top:944.92px;font-size:34px;font-weight:400;color:#33383d;letter-spacing:-0.725px;">$4.50</div>
<div class="tx" id="r2c5" style="left:1732.00px;top:944.92px;font-size:34px;font-weight:400;color:#33383d;letter-spacing:-0.800px;">-$0.55</div>
<div class="tx" id="r2c6" style="left:1980.00px;top:944.92px;font-size:34px;font-weight:400;color:#33383d;letter-spacing:-0.850px;">$3.95</div>
<div class="tx" id="r2c7" style="left:2112.00px;top:944.92px;font-size:34px;font-weight:400;color:#33383d;letter-spacing:-1.550px;">8.13%</div>
<div class="tx" id="bs" style="left:202.00px;top:1058.71px;font-size:32px;font-weight:700;color:#6c757d;letter-spacing:-1.675px;">BASIS</div>
<div class="tx" id="bh0" style="left:221.00px;top:1129.49px;font-size:26px;font-weight:700;color:#33383d;letter-spacing:1.100px;">Amount</div>
<div class="tx" id="bh1" style="left:392.00px;top:1129.49px;font-size:26px;font-weight:700;color:#33383d;letter-spacing:1.900px;">Date</div>
<div class="tx" id="bh2" style="left:583.00px;top:1129.49px;font-size:26px;font-weight:700;color:#33383d;letter-spacing:0.821px;">Contract Number</div>
<div class="tx" id="bh3" style="left:875.00px;top:1129.49px;font-size:26px;font-weight:700;color:#33383d;letter-spacing:0.438px;">Delivery Location</div>
<div class="tx" id="bh4" style="left:1167.00px;top:1129.49px;font-size:26px;font-weight:700;color:#33383d;letter-spacing:0.521px;">Delivery Period</div>
<div class="tx" id="bh5" style="left:1430.00px;top:1129.49px;font-size:26px;font-weight:700;color:#33383d;letter-spacing:0.833px;">Futures Month</div>
<div class="tx" id="bh6" style="left:1688.00px;top:1129.49px;font-size:26px;font-weight:700;color:#33383d;letter-spacing:-0.675px;">Basis</div>
<div class="tx" id="bh7" style="left:1831.00px;top:1129.49px;font-size:26px;font-weight:700;color:#33383d;letter-spacing:0.783px;">Percent</div>
<div class="tx" id="bh8" style="left:1949.00px;top:1129.49px;font-size:26px;font-weight:700;color:#33383d;letter-spacing:0.250px;">Actions</div>
<div class="tx" id="b1c0" style="left:220.00px;top:1199.72px;font-size:34px;font-weight:400;color:#33383d;letter-spacing:-0.750px;">20,000 BU</div>
<div class="tx" id="b1c1" style="left:391.00px;top:1199.72px;font-size:34px;font-weight:400;color:#33383d;letter-spacing:-0.730px;">Feb 6, 2026</div>
<div class="tx" id="b1c2" style="left:582.00px;top:1199.72px;font-size:34px;font-weight:400;color:#33383d;letter-spacing:-1.611px;">CORN-B-332</div>
<div class="tx" id="b1c3" style="left:874.00px;top:1199.72px;font-size:34px;font-weight:400;color:#33383d;letter-spacing:0.333px;">Northern Granary</div>
<div class="tx" id="b1c4" style="left:1165.00px;top:1199.72px;font-size:34px;font-weight:400;color:#33383d;letter-spacing:-1.043px;">Jun 2026</div>
<div class="tx" id="b1c5" style="left:1429.00px;top:1199.72px;font-size:34px;font-weight:400;color:#33383d;letter-spacing:-0.400px;">May 2026</div>
<div class="tx" id="b1c6" style="left:1689.00px;top:1199.72px;font-size:34px;font-weight:400;color:#33383d;letter-spacing:-1.125px;">$0.00</div>
<div class="tx" id="b1c7" style="left:1822.00px;top:1199.72px;font-size:34px;font-weight:400;color:#33383d;letter-spacing:-1.440px;">27.54%</div>
<div class="tx" id="roll" style="left:1983.00px;top:1202.23px;font-size:29.5px;font-weight:400;color:#4f8f45;letter-spacing:-0.433px;">Roll</div>
<div class="tx" id="conv" style="left:2092.00px;top:1202.23px;font-size:29.5px;font-weight:400;color:#4f8f45;letter-spacing:-0.033px;">Convert</div>
<div class="tx" id="oo" style="left:240.00px;top:1328.14px;font-size:27px;font-weight:700;color:#6c757d;letter-spacing:0.350px;">OPEN ORDERS</div>
<div class="tx" id="noo" style="left:1141.00px;top:1501.68px;font-size:37px;font-weight:700;color:#33383d;letter-spacing:1.269px;">No Open Orders</div>
<div class="tx" id="cnf1" style="left:856.60px;top:1586.82px;font-size:34px;font-weight:400;color:#33383d;letter-spacing:-0.071px;">Could not find any contracts matching the selected</div>
<div class="tx" id="cnf2" style="left:1620.80px;top:1586.82px;font-size:34px;font-weight:700;color:#33383d;letter-spacing:0.714px;">filters.</div>
</body></html>
